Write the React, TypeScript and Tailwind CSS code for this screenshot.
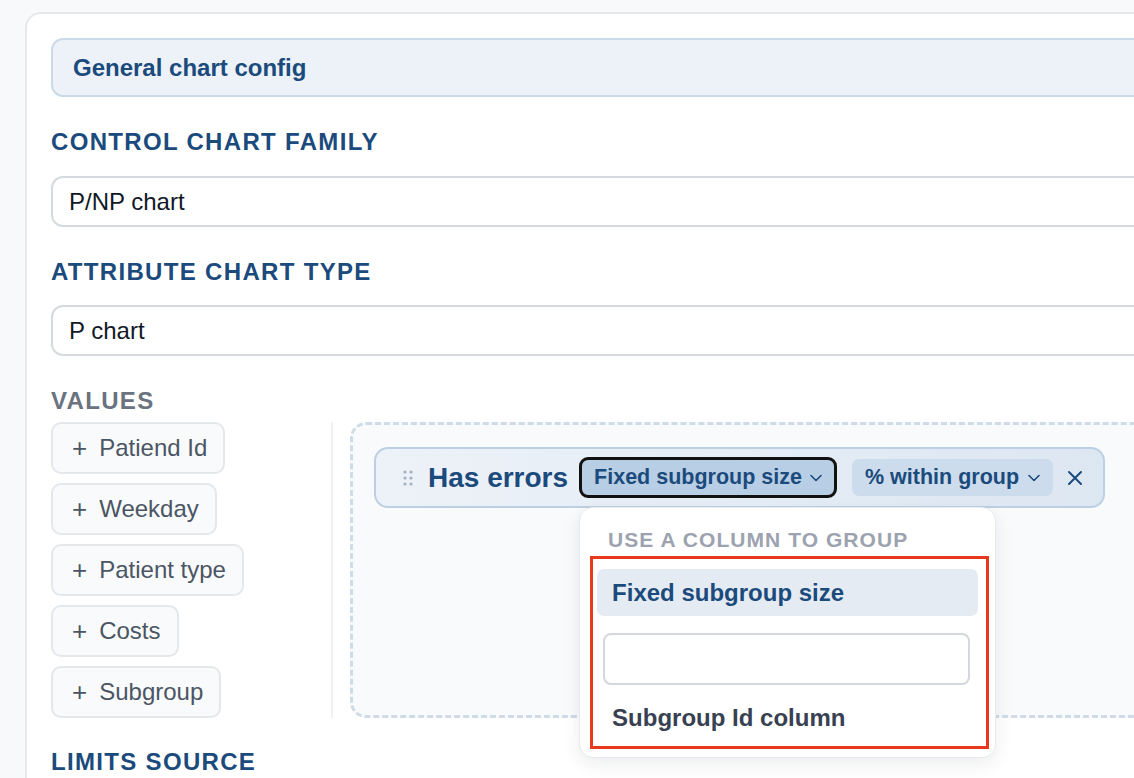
import React from 'react'

const font = { fontFamily: '"Liberation Sans", Arial, Helvetica, sans-serif' }

function Chevron() {
  return (
    <svg width="12" height="8" viewBox="0 0 12 8" fill="none" className="shrink-0">
      <polyline points="1,1.5 6,6.5 11,1.5" stroke="currentColor" strokeWidth="1.6" strokeLinecap="round" strokeLinejoin="round" />
    </svg>
  )
}

function DragHandle() {
  return (
    <svg width="10" height="16" viewBox="0 0 10 16" className="shrink-0">
      {[2, 8, 14].map((cy) =>
        [2, 8].map((cx) => <circle key={`${cx}-${cy}`} cx={cx} cy={cy} r="1.6" fill="#a3b0c0" />)
      )}
    </svg>
  )
}

function CloseIcon() {
  return (
    <svg width="16" height="16" viewBox="0 0 16 16" fill="none">
      <path d="M2 2L14 14M14 2L2 14" stroke="#1b4a7c" strokeWidth="2" strokeLinecap="round" />
    </svg>
  )
}

const fields = ['Patiend Id', 'Weekday', 'Patient type', 'Costs', 'Subgroup']

export default function App() {
  return (
    <div className="h-screen w-full overflow-hidden bg-[#f7f9fb]" style={font}>
      <div className="ml-[25px] mt-[12px] w-[1200px] rounded-[16px] border-2 border-[#e6e8eb] bg-white px-[24px] pt-[24px] pb-[40px]">
        {/* Section header */}
        <div className="flex h-[59px] items-center rounded-[12px] border-2 border-[#cbdaea] bg-[#edf2f8] pl-[20px]">
          <span className="text-[24px] font-bold text-[#1b4a7c]">General chart config</span>
        </div>

        <div className="mt-[27px] text-[24px] leading-[36px] font-bold uppercase tracking-[0.055em] text-[#1b4a7c]">
          Control chart family
        </div>
        <div className="mt-[16px] flex h-[51px] items-center rounded-[12px] border-2 border-[#d6d9de] px-[16px] text-[24px] text-[#111827]">
          P/NP chart
        </div>

        <div className="mt-[27px] text-[24px] leading-[36px] font-bold uppercase tracking-[0.055em] text-[#1b4a7c]">
          Attribute chart type
        </div>
        <div className="mt-[15px] flex h-[51px] items-center rounded-[12px] border-2 border-[#d6d9de] px-[16px] text-[24px] text-[#111827]">
          P chart
        </div>

        <div className="mt-[27px] text-[24px] leading-[36px] font-bold uppercase tracking-[0.055em] text-[#6b7280]">
          Values
        </div>

        <div className="mt-[3px] flex items-stretch">
          {/* Available fields */}
          <div className="flex w-[282px] shrink-0 flex-col items-start gap-[9px] border-r-2 border-[#eef0f3]">
            {fields.map((f) => (
              <div
                key={f}
                className="flex h-[52px] items-center gap-[12px] rounded-[10px] border-2 border-[#e5e8eb] bg-[#f8fafc] pl-[19px] pr-[16px] text-[24px] text-[#4b5563]"
              >
                <span className="text-[26px] leading-none">+</span>
                <span>{f}</span>
              </div>
            ))}
          </div>

          {/* Drop zone */}
          <div className="ml-[17px] flex-1 rounded-[16px] border-[3px] border-dashed border-[#cfdbe7] bg-[#f8fafc] px-[21px] pt-[22px]">
            <div className="inline-flex h-[61px] items-center rounded-[14px] border-2 border-[#bdd0e3] bg-linear-to-r from-[#edf2f8] to-[#dde7f2] pl-[27px] pr-[20px]">
              <DragHandle />
              <span className="ml-[15px] text-[28px] font-bold text-[#1b4a7c]">Has errors</span>

              <div className="relative ml-[11px]">
                <div className="flex h-[41px] items-center gap-[8px] rounded-[9px] border-[3px] border-[#111] bg-[#b8cee4] px-[12px] text-[21.5px] font-bold text-[#1b4a7c]">
                  Fixed subgroup size
                  <Chevron />
                </div>

                {/* Dropdown */}
                <div className="absolute left-0 top-[50px] z-10 w-[417px] rounded-[14px] border border-[#e7e9ec] bg-white px-[17px] pt-[19px] pb-[16px] shadow-[0_6px_18px_rgba(15,23,42,0.08)]">
                  <div className="pl-[11px] text-[21px] leading-[26px] font-bold uppercase tracking-[0.05em] text-[#9ca3af]">
                    Use a column to group
                  </div>
                  <div className="mt-[16px] flex h-[47px] items-center rounded-[7px] bg-[#e5ebf3] px-[15px] text-[24px] font-bold text-[#1b4a7c]">
                    Fixed subgroup size
                  </div>
                  <div className="ml-[6px] mr-[8px] mt-[17px] h-[52px] rounded-[8px] border-2 border-[#d4d7dc] bg-white" />
                  <div className="mt-[9px] flex h-[47px] items-center px-[15px] text-[24px] font-bold text-[#374151]">
                    Subgroup Id column
                  </div>
                  {/* annotation */}
                  <div className="pointer-events-none absolute left-[10px] top-[48px] h-[193px] w-[399px] border-[3px] border-[#e8391c]" />
                </div>
              </div>

              <div className="ml-[15px] flex h-[37px] items-center gap-[9px] rounded-[7px] bg-[#cddcec] px-[13px] text-[21.5px] font-bold text-[#1b4a7c]">
                % within group
                <Chevron />
              </div>
              <div className="ml-[14px]">
                <CloseIcon />
              </div>
            </div>
          </div>
        </div>

        <div className="mt-[26px] text-[24px] leading-[36px] font-bold uppercase tracking-[0.055em] text-[#1b4a7c]">
          Limits source
        </div>
      </div>
    </div>
  )
}
